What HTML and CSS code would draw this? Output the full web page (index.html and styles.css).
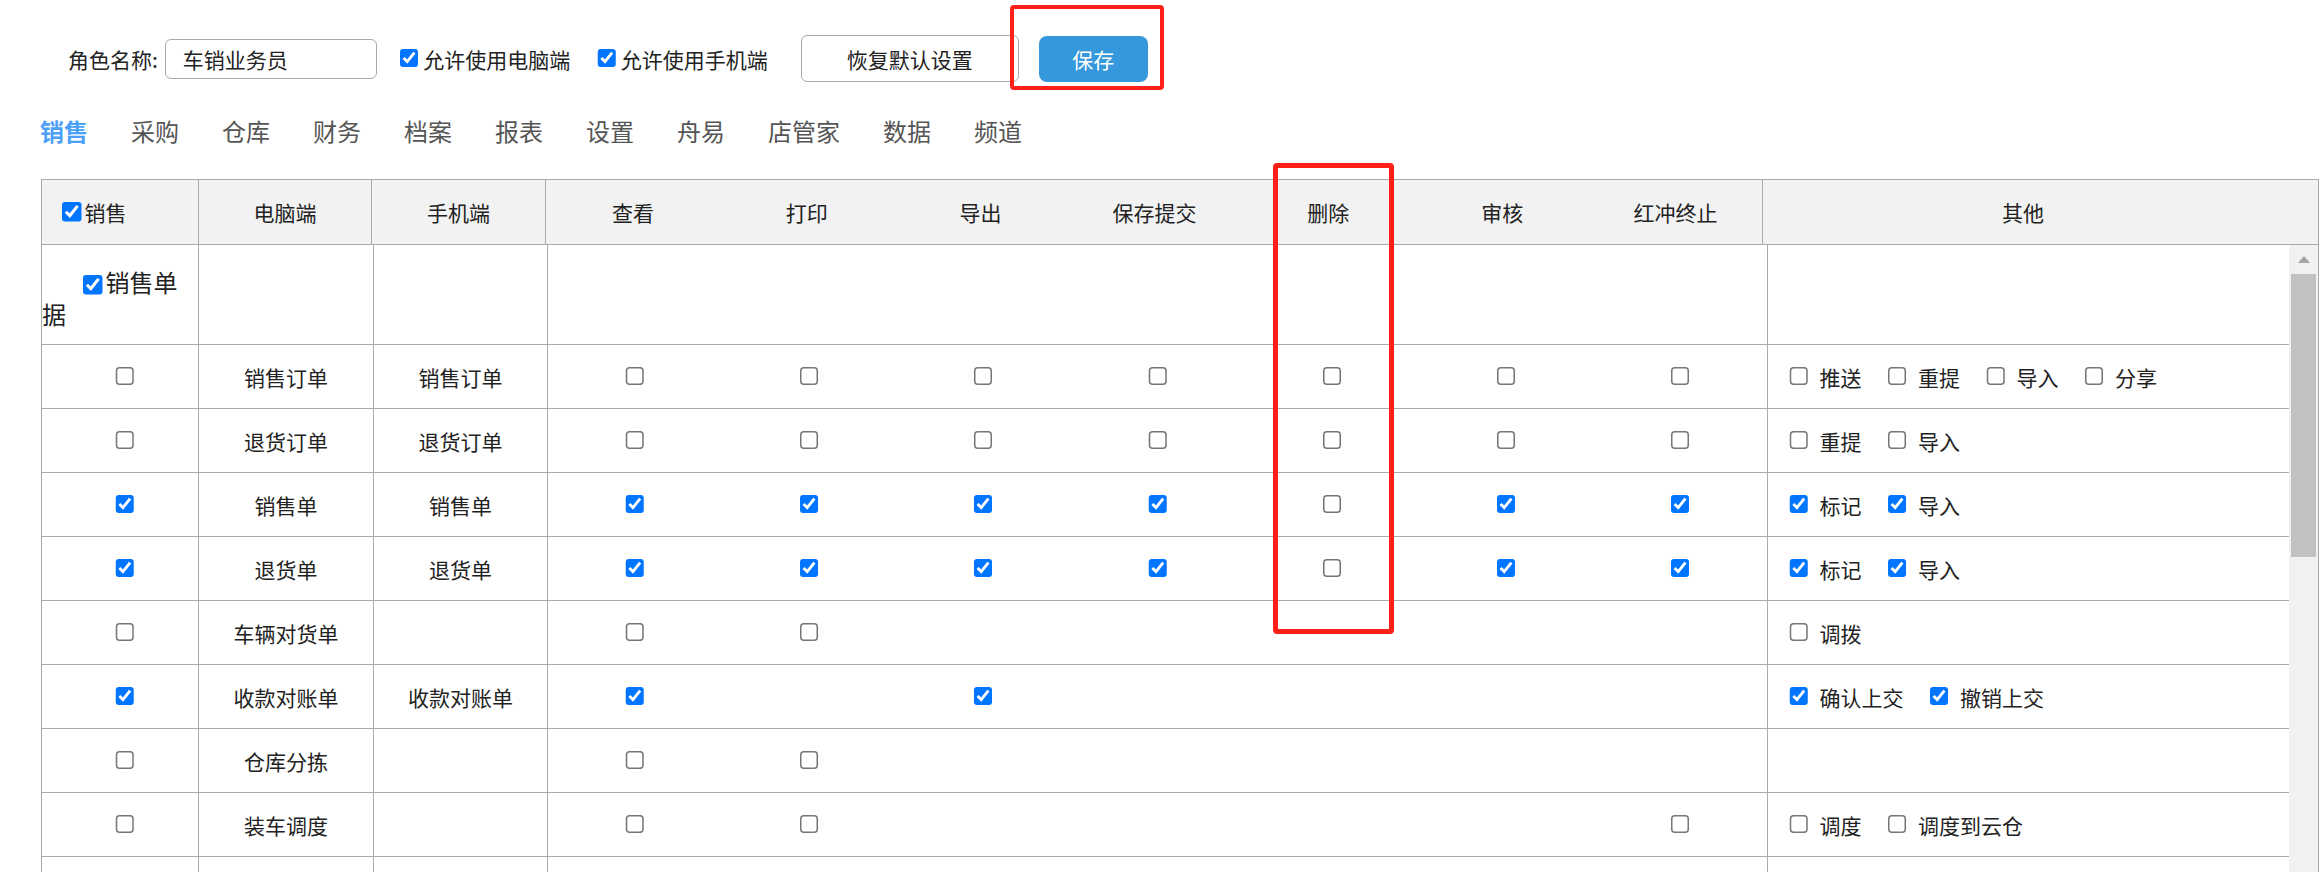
FILE: index.html
```html
<!DOCTYPE html>
<html lang="zh-CN">
<head>
<meta charset="utf-8">
<title>角色权限</title>
<link rel="stylesheet" href="styles.css">
</head>
<body>
<div class="page">
  <div class="toolbar">
    <span class="role-label">角色名称:</span>
    <input class="role-input" type="text" value="车销业务员">
    <label class="opt"><input type="checkbox" checked><span>允许使用电脑端</span></label>
    <label class="opt"><input type="checkbox" checked><span>允许使用手机端</span></label>
    <button class="btn-reset">恢复默认设置</button>
    <button class="btn-save">保存</button>
  </div>

  <div class="tabs">
    <span class="tab active">销售</span>
    <span class="tab">采购</span>
    <span class="tab">仓库</span>
    <span class="tab">财务</span>
    <span class="tab">档案</span>
    <span class="tab">报表</span>
    <span class="tab">设置</span>
    <span class="tab">舟易</span>
    <span class="tab">店管家</span>
    <span class="tab">数据</span>
    <span class="tab">频道</span>
  </div>

  <div class="grid">
    <div class="head">
      <div class="hc first sep"><input type="checkbox" checked><span>销售</span></div>
      <div class="hc sep">电脑端</div>
      <div class="hc sep">手机端</div>
      <div class="hc">查看</div>
      <div class="hc">打印</div>
      <div class="hc">导出</div>
      <div class="hc">保存提交</div>
      <div class="hc">删除</div>
      <div class="hc">审核</div>
      <div class="hc sep">红冲终止</div>
      <div class="hc other-h">其他</div>
    </div>

    <div class="body">
      <div class="rows">
        <div class="row group">
          <div class="c c1 sep grp"><div class="grp-text"><input type="checkbox" checked><span class="grp-label">销售单据</span></div></div>
          <div class="c sep"></div>
          <div class="c sep"></div>
          <div class="c"></div><div class="c"></div><div class="c"></div><div class="c"></div><div class="c"></div><div class="c"></div>
          <div class="c sep"></div>
          <div class="c other"></div>
        </div>

        <div class="row">
          <div class="c c1 sep"><input type="checkbox"></div>
          <div class="c sep">销售订单</div>
          <div class="c sep">销售订单</div>
          <div class="c"><input type="checkbox"></div>
          <div class="c"><input type="checkbox"></div>
          <div class="c"><input type="checkbox"></div>
          <div class="c"><input type="checkbox"></div>
          <div class="c"><input type="checkbox"></div>
          <div class="c"><input type="checkbox"></div>
          <div class="c sep"><input type="checkbox"></div>
          <div class="c other">
            <label class="oi"><input type="checkbox"><span>推送</span></label>
            <label class="oi"><input type="checkbox"><span>重提</span></label>
            <label class="oi"><input type="checkbox"><span>导入</span></label>
            <label class="oi"><input type="checkbox"><span>分享</span></label>
          </div>
        </div>

        <div class="row">
          <div class="c c1 sep"><input type="checkbox"></div>
          <div class="c sep">退货订单</div>
          <div class="c sep">退货订单</div>
          <div class="c"><input type="checkbox"></div>
          <div class="c"><input type="checkbox"></div>
          <div class="c"><input type="checkbox"></div>
          <div class="c"><input type="checkbox"></div>
          <div class="c"><input type="checkbox"></div>
          <div class="c"><input type="checkbox"></div>
          <div class="c sep"><input type="checkbox"></div>
          <div class="c other">
            <label class="oi"><input type="checkbox"><span>重提</span></label>
            <label class="oi"><input type="checkbox"><span>导入</span></label>
          </div>
        </div>

        <div class="row">
          <div class="c c1 sep"><input type="checkbox" checked></div>
          <div class="c sep">销售单</div>
          <div class="c sep">销售单</div>
          <div class="c"><input type="checkbox" checked></div>
          <div class="c"><input type="checkbox" checked></div>
          <div class="c"><input type="checkbox" checked></div>
          <div class="c"><input type="checkbox" checked></div>
          <div class="c"><input type="checkbox"></div>
          <div class="c"><input type="checkbox" checked></div>
          <div class="c sep"><input type="checkbox" checked></div>
          <div class="c other">
            <label class="oi"><input type="checkbox" checked><span>标记</span></label>
            <label class="oi"><input type="checkbox" checked><span>导入</span></label>
          </div>
        </div>

        <div class="row">
          <div class="c c1 sep"><input type="checkbox" checked></div>
          <div class="c sep">退货单</div>
          <div class="c sep">退货单</div>
          <div class="c"><input type="checkbox" checked></div>
          <div class="c"><input type="checkbox" checked></div>
          <div class="c"><input type="checkbox" checked></div>
          <div class="c"><input type="checkbox" checked></div>
          <div class="c"><input type="checkbox"></div>
          <div class="c"><input type="checkbox" checked></div>
          <div class="c sep"><input type="checkbox" checked></div>
          <div class="c other">
            <label class="oi"><input type="checkbox" checked><span>标记</span></label>
            <label class="oi"><input type="checkbox" checked><span>导入</span></label>
          </div>
        </div>

        <div class="row">
          <div class="c c1 sep"><input type="checkbox"></div>
          <div class="c sep">车辆对货单</div>
          <div class="c sep"></div>
          <div class="c"><input type="checkbox"></div>
          <div class="c"><input type="checkbox"></div>
          <div class="c"></div>
          <div class="c"></div>
          <div class="c"></div>
          <div class="c"></div>
          <div class="c sep"></div>
          <div class="c other">
            <label class="oi"><input type="checkbox"><span>调拨</span></label>
          </div>
        </div>

        <div class="row">
          <div class="c c1 sep"><input type="checkbox" checked></div>
          <div class="c sep">收款对账单</div>
          <div class="c sep">收款对账单</div>
          <div class="c"><input type="checkbox" checked></div>
          <div class="c"></div>
          <div class="c"><input type="checkbox" checked></div>
          <div class="c"></div>
          <div class="c"></div>
          <div class="c"></div>
          <div class="c sep"></div>
          <div class="c other">
            <label class="oi"><input type="checkbox" checked><span>确认上交</span></label>
            <label class="oi"><input type="checkbox" checked><span>撤销上交</span></label>
          </div>
        </div>

        <div class="row">
          <div class="c c1 sep"><input type="checkbox"></div>
          <div class="c sep">仓库分拣</div>
          <div class="c sep"></div>
          <div class="c"><input type="checkbox"></div>
          <div class="c"><input type="checkbox"></div>
          <div class="c"></div>
          <div class="c"></div>
          <div class="c"></div>
          <div class="c"></div>
          <div class="c sep"></div>
          <div class="c other"></div>
        </div>

        <div class="row">
          <div class="c c1 sep"><input type="checkbox"></div>
          <div class="c sep">装车调度</div>
          <div class="c sep"></div>
          <div class="c"><input type="checkbox"></div>
          <div class="c"><input type="checkbox"></div>
          <div class="c"></div>
          <div class="c"></div>
          <div class="c"></div>
          <div class="c"></div>
          <div class="c sep"><input type="checkbox"></div>
          <div class="c other">
            <label class="oi"><input type="checkbox"><span>调度</span></label>
            <label class="oi"><input type="checkbox"><span>调度到云仓</span></label>
          </div>
        </div>

        <div class="row">
          <div class="c c1 sep"></div>
          <div class="c sep"></div>
          <div class="c sep"></div>
          <div class="c"></div><div class="c"></div><div class="c"></div><div class="c"></div><div class="c"></div><div class="c"></div>
          <div class="c sep"></div>
          <div class="c other"></div>
        </div>
      </div>

      <div class="scrollbar">
        <div class="sb-arrow"><span class="sb-tri"></span></div>
        <div class="sb-thumb"></div>
      </div>
    </div>
  </div>

  <div class="mark mark-save"></div>
  <div class="mark mark-del"></div>
</div>
</body>
</html>
```

FILE: styles.css
```css
* { box-sizing: border-box; }

html, body {
  margin: 0;
  padding: 0;
  background: #fff;
}

body {
  font-family: "Noto Sans CJK SC", "Noto Sans", sans-serif;
  font-size: 21px;
  line-height: 28px;
  color: #222;
  overflow: hidden;
}

.page {
  position: relative;
  width: 2319px;
  height: 872px;
  overflow: hidden;
}

input[type="checkbox"] {
  width: 13px;
  height: 13px;
  margin: 0;
  zoom: 1.5;
  accent-color: #0075ff;
  flex: none;
}

/* ---------- toolbar ---------- */
.toolbar {
  display: flex;
  align-items: center;
  height: 47px;
  margin-top: 35px;
  padding-left: 68px;
}

.role-label {
  margin-right: 7px;
}

.role-input {
  width: 212px;
  height: 40px;
  border: 1px solid #aaa;
  border-radius: 6px;
  padding: 0 0 0 17px;
  font-family: inherit;
  font-size: 21px;
  color: #222;
  margin-right: 23px;
  outline: none;
}

.opt {
  display: flex;
  align-items: center;
}

.opt span {
  margin-left: 4px;
}

.opt + .opt {
  margin-left: 27px;
}

.btn-reset {
  margin-left: 33px;
  width: 218px;
  height: 47px;
  background: #fff;
  border: 1px solid #aaa;
  border-radius: 6px;
  font-family: inherit;
  font-size: 21px;
  color: #222;
  padding: 0;
}

.btn-save {
  margin-left: 20px;
  width: 109px;
  height: 46px;
  background: #3598dc;
  color: #fff;
  border: none;
  border-radius: 8px;
  font-family: inherit;
  font-size: 21px;
  padding: 0;
}

/* ---------- tabs ---------- */
.tabs {
  display: flex;
  gap: 43px;
  margin-top: 33px;
  padding-left: 40px;
  font-size: 24px;
  line-height: 32px;
  color: #555;
}

.tab.active {
  color: #4ca0f8;
  font-weight: bold;
}

/* ---------- grid ---------- */
.grid {
  margin-top: 32px;
  margin-left: 41px;
  width: 2278px;
  border-left: 1px solid #aaa;
  border-right: 1px solid #aaa;
  border-top: 1px solid #aaa;
}

.head {
  display: grid;
  grid-template-columns: 157px 173px 174px repeat(7, 173.857px) 1fr;
  height: 65px;
  background: #f2f2f2;
  border-bottom: 1px solid #aaa;
}

.hc {
  display: flex;
  align-items: center;
  justify-content: center;
}

.hc.sep {
  border-right: 1px solid #aaa;
}

.hc.first {
  justify-content: flex-start;
  padding-left: 20px;
}

.hc.first span {
  margin-left: 3px;
}

.hc.other-h {
  padding-right: 35px;
}

.body {
  display: flex;
  height: 640px;
}

.rows {
  flex: 1;
  min-width: 0;
}

.row {
  display: grid;
  grid-template-columns: 157px 175px 174px repeat(7, 174.3px) 1fr;
  height: 64px;
  border-bottom: 1px solid #aaa;
}

.row.group {
  height: 100px;
}

.c {
  display: flex;
  align-items: center;
  justify-content: center;
  white-space: nowrap;
}

.c.sep {
  border-right: 1px solid #aaa;
}

.c.c1 {
  padding-left: 10px;
}

.c.grp {
  padding: 6px 0 0 0;
  justify-content: flex-start;
  white-space: normal;
}

.grp-text {
  width: 100%;
  font-size: 24px;
  line-height: 32px;
  text-indent: 41px;
}

.grp-text input {
  vertical-align: -2px;
}

.grp-label {
  margin-left: 3px;
}

.c.other {
  justify-content: flex-start;
  padding-left: 21px;
}

.oi {
  display: flex;
  align-items: center;
  margin-right: 26px;
}

.oi span {
  margin-left: 11px;
}

/* ---------- fake scrollbar ---------- */
.scrollbar {
  width: 29px;
  background: #f1f1f1;
  display: flex;
  flex-direction: column;
}

.sb-arrow {
  height: 29px;
  display: flex;
  align-items: center;
  justify-content: center;
}

.sb-tri {
  width: 0;
  height: 0;
  border-left: 6px solid transparent;
  border-right: 6px solid transparent;
  border-bottom: 7px solid #a3a3a3;
}

.sb-thumb {
  height: 283px;
  margin-left: 2px;
  width: 25px;
  background: #c1c1c1;
}

/* ---------- red annotation boxes ---------- */
.mark {
  position: absolute;
  border: 4px solid #ff2119;
  border-radius: 4px;
  pointer-events: none;
}

.mark-save {
  left: 1010px;
  top: 5px;
  width: 154px;
  height: 85px;
}

.mark-del {
  left: 1273px;
  top: 163px;
  width: 121px;
  height: 471px;
  border-width: 5px;
}
```
